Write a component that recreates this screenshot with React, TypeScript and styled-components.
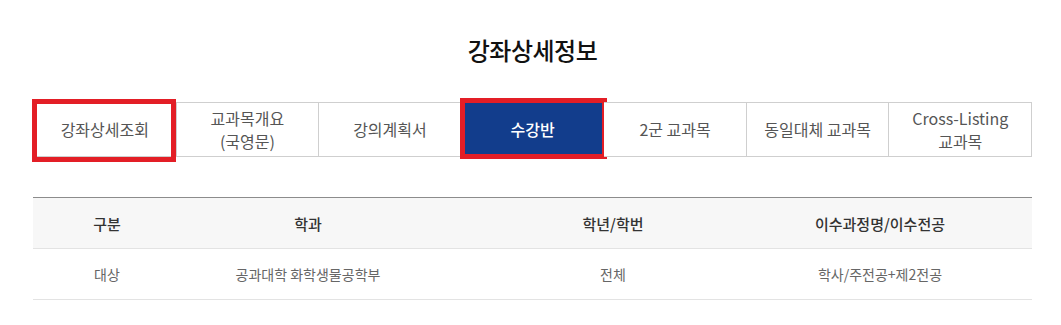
import * as React from "react";
import styled, { createGlobalStyle } from "styled-components";

const GlobalStyles = createGlobalStyle`
  html, body {
    margin: 0;
    padding: 0;
    background: #fff;
  }
  body {
    font-family: "Noto Sans CJK KR", "Noto Sans", sans-serif;
    color: #333;
  }
`;

const Page = styled.main`
  width: 999px;
  padding: 33px 0 0 33px;
`;

const Title = styled.h1`
  margin: 0;
  font-size: 24px;
  font-weight: 500;
  line-height: 34px;
  text-align: center;
  color: #111;
  letter-spacing: -0.5px;
`;

const Tabs = styled.nav`
  display: flex;
  margin-top: 35px;
  height: 55px;
`;

const Tab = styled.div<{ $active?: boolean }>`
  position: relative;
  flex: 1;
  display: flex;
  align-items: center;
  justify-content: center;
  text-align: center;
  box-sizing: border-box;
  border: 1px solid #cfcfcf;
  border-left: none;
  &:first-child {
    border-left: 1px solid #cfcfcf;
  }
  background: ${(p) => (p.$active ? "#123d8c" : "#fff")};
  color: ${(p) => (p.$active ? "#fff" : "#555")};
  font-size: 16px;
  font-weight: ${(p) => (p.$active ? 500 : 400)};
  line-height: 23px;
`;

const Highlight = styled.span<{ $inset: string }>`
  position: absolute;
  inset: ${(p) => p.$inset};
  border: 5px solid #e31e26;
  pointer-events: none;
`;

const Table = styled.div`
  margin-top: 40px;
  border-top: 1px solid #8c8c8c;
`;

const Row = styled.div<{ $head?: boolean }>`
  display: grid;
  grid-template-columns: 148px 254px 356px 178px 1fr;
  height: 50px;
  align-items: center;
  border-bottom: 1px solid #e3e3e3;
  background: ${(p) => (p.$head ? "#f7f7f7" : "#fff")};
  color: ${(p) => (p.$head ? "#333" : "#666")};
  font-size: ${(p) => (p.$head ? "15px" : "14px")};
  font-weight: ${(p) => (p.$head ? 500 : 400)};
`;

const Cell = styled.div`
  text-align: center;
`;

const tabs = [
  { label: ["강좌상세조회"], mark: "-4px 0 -6px -2px" },
  { label: ["교과목개요", "(국영문)"] },
  { label: ["강의계획서"] },
  { label: ["수강반"], active: true, mark: "-5px -4px -3px -2px" },
  { label: ["2군 교과목"] },
  { label: ["동일대체 교과목"] },
  { label: ["Cross-Listing", "교과목"] },
];

const head = ["구분", "학과", "학년/학번", "이수과정명/이수전공"];
const body = ["대상", "공과대학 화학생물공학부", "전체", "학사/주전공+제2전공"];

export default function App() {
  return (
    <>
      <GlobalStyles />
      <Page>
        <Title>강좌상세정보</Title>
        <Tabs>
          {tabs.map((t, i) => (
            <Tab key={i} $active={t.active}>
              <span>
                {t.label.map((l, j) => (
                  <React.Fragment key={j}>
                    {j > 0 && <br />}
                    {l}
                  </React.Fragment>
                ))}
              </span>
              {t.mark && <Highlight $inset={t.mark} />}
            </Tab>
          ))}
        </Tabs>
        <Table>
          <Row $head>
            {head.map((h) => (
              <Cell key={h}>{h}</Cell>
            ))}
            <Cell />
          </Row>
          <Row>
            {body.map((b) => (
              <Cell key={b}>{b}</Cell>
            ))}
            <Cell />
          </Row>
        </Table>
      </Page>
    </>
  );
}
